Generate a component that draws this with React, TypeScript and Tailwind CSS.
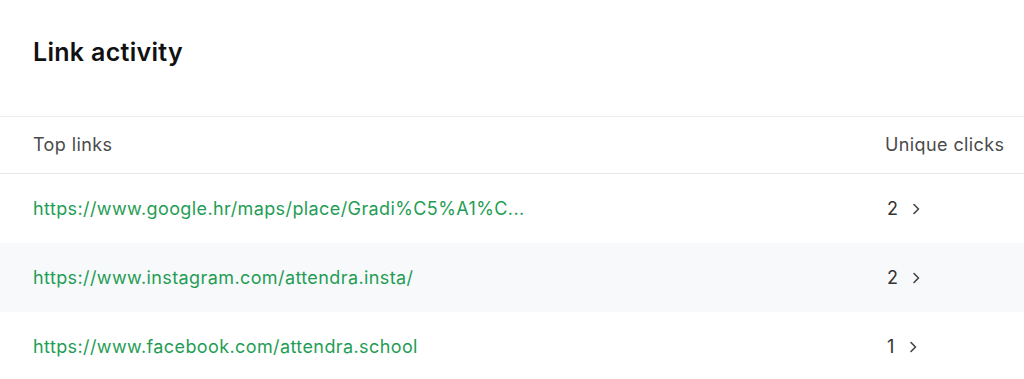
import React from "react";

const links = [
  { url: "https://www.google.hr/maps/place/Gradi%C5%A1%C...", clicks: 2 },
  { url: "https://www.instagram.com/attendra.insta/", clicks: 2 },
  { url: "https://www.facebook.com/attendra.school", clicks: 1 },
];

const Chevron: React.FC = () => (
  <svg width="8" height="12" viewBox="0 0 8 12" fill="none" className="text-[#444]">
    <path d="M2 1.5L6.5 6L2 10.5" stroke="currentColor" strokeWidth="1.6" strokeLinecap="round" strokeLinejoin="round" />
  </svg>
);

const App: React.FC = () => {
  return (
    <div className="w-[1024px] h-[379px] overflow-hidden bg-white font-['Inter',sans-serif]">
      <div className="h-[116px] pl-[33px] pt-[36px]">
        <h2 className="text-[25px] leading-8 font-semibold tracking-[0.3px] text-[#111]">Link activity</h2>
      </div>

      <div className="border-t border-[#ececec]">
        <div className="flex h-[57px] items-center border-b border-[#e6e6e6] text-[18px] leading-6 tracking-[0.4px] text-[#4a4a4a]">
          <div className="flex-1 pl-[33px]">Top links</div>
          <div className="w-[139px]">Unique clicks</div>
        </div>

        {links.map((link, i) => (
          <div
            key={link.url}
            className={
              "flex h-[69px] items-center text-[18px] leading-6 tracking-[0.4px] " +
              (i % 2 === 1 ? "bg-[#f8f9fb]" : "bg-white")
            }
          >
            <div className="flex-1 pl-[33px] text-[#1f9d55]">{link.url}</div>
            <div className="flex w-[139px] items-center gap-[14px] pl-[2px] text-[#333]">
              <span>{link.clicks}</span>
              <Chevron />
            </div>
          </div>
        ))}
      </div>
    </div>
  );
};

export default App;
